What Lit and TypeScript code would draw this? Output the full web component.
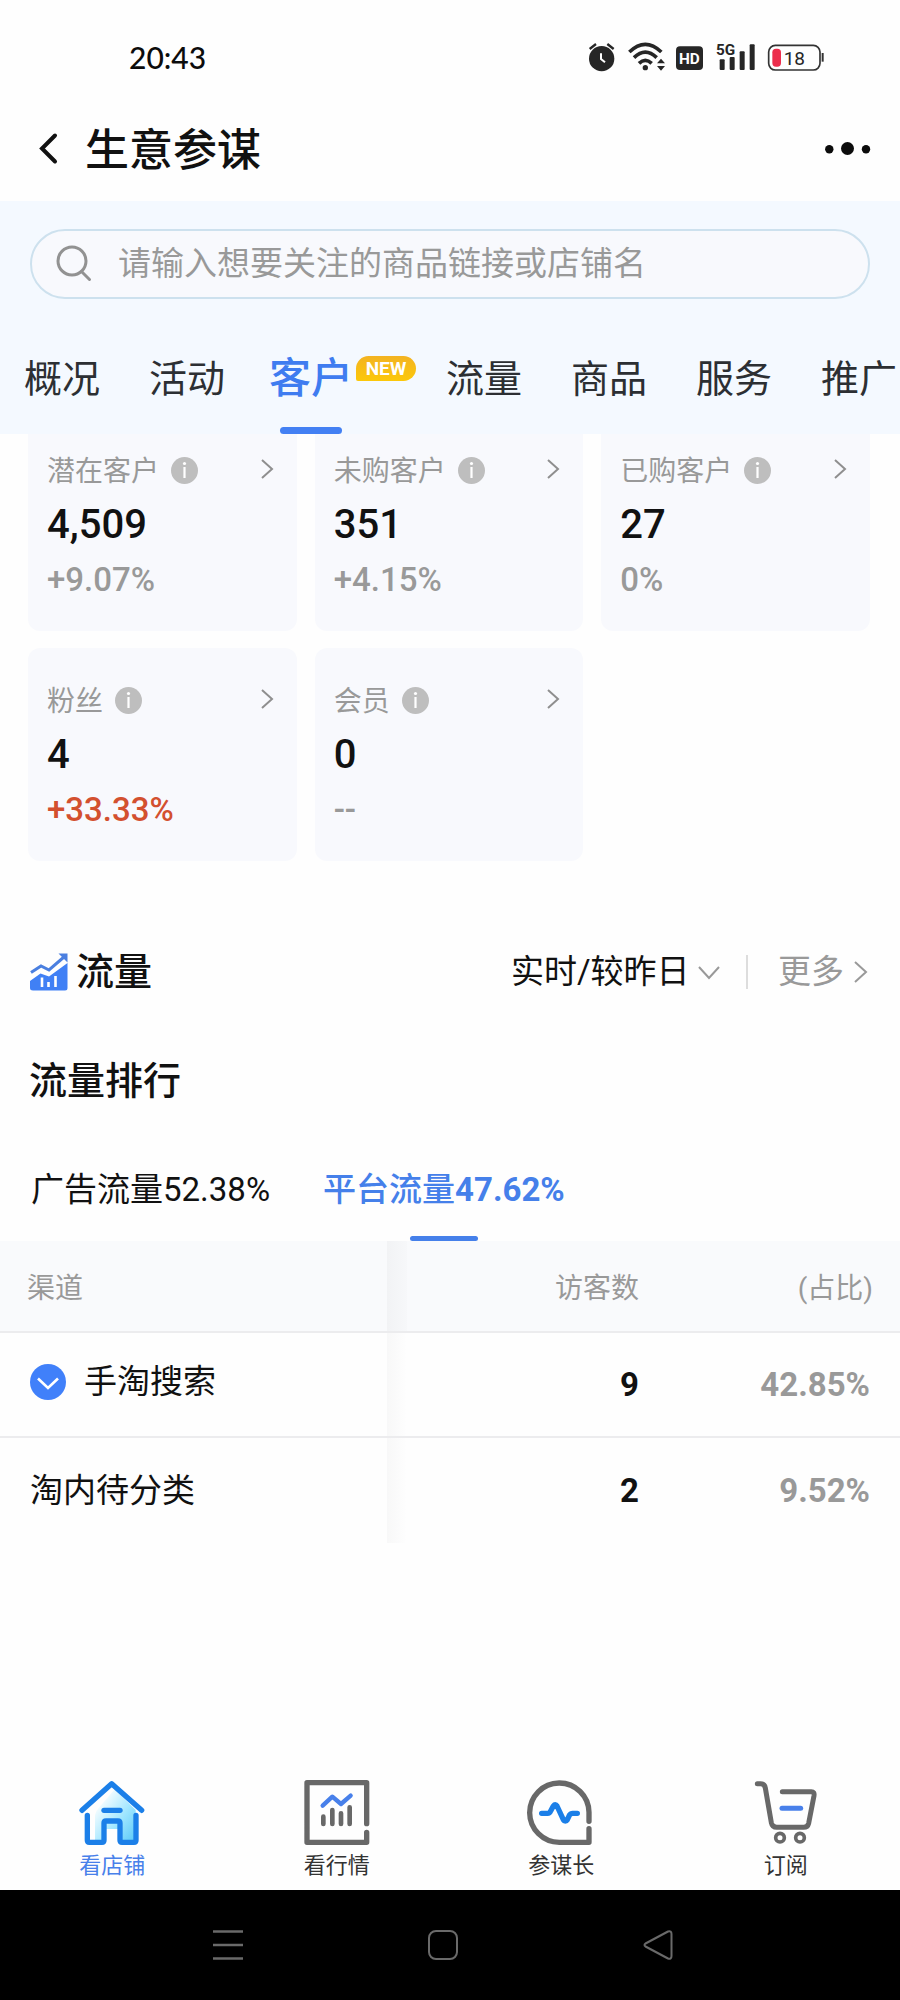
import { LitElement, html, css, svg } from "lit";
import { customElement, property, state } from "lit/decorators.js";
import { classMap } from "lit/directives/class-map.js";

const reset = css`
  * {
    box-sizing: border-box;
  }
  button,
  select,
  input {
    margin: 0;
    padding: 0;
    border: 0;
    background: none;
    color: inherit;
    font: inherit;
    letter-spacing: inherit;
    outline: none;
    appearance: none;
  }
  button {
    cursor: pointer;
  }
  a {
    color: inherit;
    text-decoration: none;
  }
  svg {
    display: block;
    flex: none;
    overflow: visible;
  }
`;

@customElement("status-bar")
class StatusBar extends LitElement {
  static styles = [
    reset,
    css`
      :host {
        display: flex;
        align-items: center;
        justify-content: space-between;
        padding: 36px 75px 18px 129px;
        color: #0c0c0c;
      }
      .time {
        font: 500 30px/42px Lato, Roboto, sans-serif;
      }
      .icons {
        display: flex;
        gap: 11px;
      }
      .hd {
        font: 700 46px Roboto, sans-serif;
      }
      .gen {
        font: 700 46px Roboto, sans-serif;
      }
      .charge {
        font: 400 57px Roboto, sans-serif;
      }
    `,
  ];

  render() {
    return html`
      <span class="time">20:43</span>
      <div class="icons">
        <svg width="28" height="32" viewBox="114 64 84 96" fill="none" aria-label="闹钟">
          <circle cx="155" cy="117" r="38" fill="#262626" />
          <path d="M119 88l19-15M191 88l-19-15" stroke="#262626" stroke-width="7" />
          <path d="M153 101v17l12 10" stroke="#fff" stroke-width="6" />
        </svg>
        <svg width="39" height="32" viewBox="231 64 117 96" fill="none" aria-label="无线网络">
          <g stroke="#262626" stroke-width="11">
            <path d="M238 97q48-46 96 0" />
            <path d="M252 114q34-33 68 0" />
            <path d="M267 131q19-18 38 0" />
          </g>
          <circle cx="286" cy="144" r="8" fill="#262626" />
          <path d="M321 131l12-14 12 14zM321 139l12 14 12-14z" fill="#262626" />
        </svg>
        <svg width="26" height="32" viewBox="381 64 78 96">
          <rect x="378" y="80" width="81" height="71" rx="12" fill="#262626" />
          <text class="hd" x="418" y="132" text-anchor="middle" fill="#fff">HD</text>
        </svg>
        <svg width="42" height="32" viewBox="492 64 126 96">
          <g fill="#262626">
            <rect x="509" y="119" width="15" height="32" rx="3" />
            <rect x="539" y="112" width="15" height="39" rx="3" />
            <rect x="569" y="95" width="15" height="56" rx="3" />
            <rect x="599" y="74" width="15" height="77" rx="3" />
            <text class="gen" x="498" y="107">5G</text>
          </g>
        </svg>
        <svg width="58" height="32" viewBox="651 64 174 96" fill="none">
          <rect x="656" y="77" width="154" height="74" rx="20" stroke="#333" stroke-width="5" />
          <rect x="667" y="87" width="26" height="54" rx="11" fill="#ec2d4c" />
          <path d="M818 100v26" stroke="#333" stroke-width="6" />
          <text class="charge" x="701" y="135" fill="#262626">18</text>
        </svg>
      </div>
    `;
  }
}

@customElement("metric-card")
class MetricCard extends LitElement {
  @property() label = "";
  @property() value = "";
  @property() delta = "";
  @property({ type: Boolean }) hot = false;

  static styles = [
    reset,
    css`
      :host {
        display: block;
        padding: 33px 24px 28px 19px;
        border-radius: 12px;
        background: #f8f9fd;
      }
      .top {
        display: flex;
        align-items: center;
        gap: 12px;
        height: 42px;
        color: #999;
        font-size: 28px;
        line-height: 42px;
      }
      .info {
        padding-bottom: 4px;
      }
      .go {
        margin-left: auto;
        padding-bottom: 6px;
      }
      .value {
        font-size: 40px;
        line-height: 64px;
        font-weight: 500;
        color: #111;
      }
      .delta {
        font-size: 33px;
        line-height: 46px;
        font-weight: 500;
        color: #999;
      }
      .delta.hot {
        color: #d3502f;
      }
    `,
  ];

  render() {
    return html`
      <div class="top">
        <span>${this.label}</span>
        <button class="info" aria-label="说明">
          <svg width="27" height="27" viewBox="0 0 27 27">
            <circle cx="13.5" cy="13.5" r="13.5" fill="#bebebe" />
            <circle cx="13.5" cy="6.5" r="1.6" fill="#fff" />
            <path d="M13.5 10v11" stroke="#fff" stroke-width="2.2" />
          </svg>
        </button>
        <button class="go" aria-label="查看">
          <svg width="12" height="20" viewBox="0 0 12 20" fill="none" stroke="#8f8f8f" stroke-width="2">
            <path d="M1 1l10 9-10 9" />
          </svg>
        </button>
      </div>
      <div class="value">${this.value}</div>
      <div class=${classMap({ delta: true, hot: this.hot })}>${this.delta}</div>
    `;
  }
}

const navIcons = {
  shop: svg`
    <defs>
      <linearGradient id="fill" x1="0" y1="0" x2="1" y2="1">
        <stop offset="0.15" stop-color="#fff" />
        <stop offset="0.6" stop-color="#9fe6ff" />
        <stop offset="1" stop-color="#58c8f8" />
      </linearGradient>
    </defs>
    <path d="M286 165Q290 150 300 140L345 88 408 150V247H361V207H312V247H286Z" fill="url(#fill)" />
    <g stroke="#1b7fe8" stroke-width="16" stroke-linecap="round" stroke-linejoin="round">
      <path d="M247 151L336 71 426 151" />
      <path d="M313 151H361" />
      <path d="M263 166V241Q263 247 269 247H307Q313 247 313 241V189Q313 183 319 183H355Q361 183 361 189V241Q361 247 367 247H403Q409 247 409 241V166" />
    </g>`,
  market: svg`
    <g stroke="#686868" stroke-width="16" stroke-linecap="round" stroke-linejoin="round">
      <path d="M1101 191V68H922V247H1101V217" />
      <path stroke-width="14" d="M971 170V192M998 150V192M1024 160V192M1050 142V192" />
    </g>
    <path d="M969 137L998 110 1024 132 1053 107" stroke="#4880ea" stroke-width="13" stroke-linecap="round" stroke-linejoin="round" />`,
  staff: svg`
    <path d="M421 184V157A89 89 0 1 0 332 247H421V206" stroke="#686868" stroke-width="16" stroke-linecap="round" stroke-linejoin="round" />
    <path d="M279 160H297Q303 160 306 153L314 138Q320 130 325 138L344 179Q350 188 356 179L362 166Q366 160 372 160H386" stroke="#1b7fe8" stroke-width="16" stroke-linecap="round" stroke-linejoin="round" />`,
  cart: svg`
    <g stroke="#686868" stroke-width="15" stroke-linecap="round" stroke-linejoin="round">
      <path d="M926 71H936Q948 71 950 84L968 188Q971 202 984 202H1065Q1077 202 1080 190L1096 107Q1098 95 1088 95H1001" />
      <circle cx="994" cy="233" r="13" stroke-width="11" />
      <circle cx="1054" cy="233" r="13" stroke-width="11" />
    </g>
    <path d="M1000 145H1056" stroke="#4880ea" stroke-width="15" stroke-linecap="round" />`,
};

const navItems = [
  { label: "看店铺", icon: navIcons.shop, box: "238 60 198 198" },
  { label: "看行情", icon: navIcons.market, box: "913 60 198 198" },
  { label: "参谋长", icon: navIcons.staff, box: "238 60 198 198" },
  { label: "订阅", icon: navIcons.cart, box: "913 60 198 198" },
];

@customElement("bottom-nav")
class BottomNav extends LitElement {
  static styles = [
    reset,
    css`
      :host {
        display: block;
      }
      .bar {
        display: grid;
        grid-template-columns: repeat(4, 1fr);
        padding: 0 2px 10px 0;
      }
      .item {
        display: flex;
        flex-direction: column;
        align-items: center;
        gap: 6px;
        font-size: 22px;
        line-height: 28px;
        color: #333;
      }
      .item.on {
        color: #4880ea;
      }
    `,
  ];

  render() {
    return html`
      <nav class="bar">
        ${navItems.map(
          (item, i) => html`
            <a class=${classMap({ item: true, on: i === 0 })} href="#">
              <svg width="66" height="66" viewBox=${item.box} fill="none">${item.icon}</svg>
              <span>${item.label}</span>
            </a>
          `
        )}
      </nav>
    `;
  }
}

const tabs = ["概况", "活动", "客户", "流量", "商品", "服务", "推广"];

const metrics = [
  { label: "潜在客户", value: "4,509", delta: "+9.07%" },
  { label: "未购客户", value: "351", delta: "+4.15%" },
  { label: "已购客户", value: "27", delta: "0%" },
  { label: "粉丝", value: "4", delta: "+33.33%", hot: true },
  { label: "会员", value: "0", delta: "--" },
];

const sources = [
  { name: "广告流量", share: "52.38%" },
  { name: "平台流量", share: "47.62%" },
];

const channels = [
  { name: "手淘搜索", visitors: 9, share: "42.85%", expandable: true },
  { name: "淘内待分类", visitors: 2, share: "9.52%", expandable: false },
];

@customElement("app-root")
class AppRoot extends LitElement {
  @state() private tab = "客户";
  @state() private source = 1;

  static styles = [
    reset,
    css`
      :host {
        display: flex;
        flex-direction: column;
        min-height: 100vh;
        overflow: hidden;
        background: #fefefe;
        color: #111;
        font-family: Roboto, "Noto Sans CJK SC", sans-serif;
      }
      .titlebar {
        display: flex;
        align-items: center;
        gap: 28px;
        padding: 18px 29px 17px 37px;
      }
      .title {
        margin: 0;
        padding-top: 4px;
        font-size: 44px;
        line-height: 66px;
        font-weight: 500;
      }
      .more-menu {
        margin-left: auto;
      }
      .head {
        position: relative;
        z-index: 1;
        background: #f4f9ff;
      }
      .search {
        display: flex;
        align-items: center;
        gap: 26px;
        height: 70px;
        margin: 0 30px;
        padding: 0 24px;
        border: 2px solid #cde1ee;
        border-radius: 35px;
        background: #f8f9fd;
      }
      .search-wrap {
        padding-top: 28px;
      }
      .search input {
        flex: 1;
        min-width: 0;
        font-size: 33px;
        line-height: 48px;
      }
      .search input::placeholder {
        color: #999;
        opacity: 1;
      }
      .tabs {
        display: flex;
        overflow: hidden;
        padding-top: 48px;
      }
      .tab {
        display: flex;
        flex: none;
        padding: 0 25px 0 24px;
        font-size: 38px;
        line-height: 64px;
        color: #2c2f33;
      }
      .tab .name {
        display: flex;
        flex-direction: column;
        align-items: center;
        height: 87px;
      }
      .tab.on {
        padding: 0 6px 0 19px;
        font-size: 42px;
        font-weight: 500;
        color: #3f7cf0;
      }
      .tab.on .name::after {
        content: "";
        width: 62px;
        height: 7px;
        margin-top: 16px;
        border-radius: 4px;
        background: #4380f3;
      }
      .badge {
        align-self: flex-start;
        margin: 9px 0 0 3px;
        width: 60px;
        border-radius: 13px 13px 13px 2px;
        background: linear-gradient(#f3b322, #fcc80a);
        color: #fff;
        font-size: 19px;
        line-height: 25px;
        font-weight: 700;
        text-align: center;
      }
      .content {
        flex: 1;
      }
      .cards {
        display: grid;
        grid-template-columns: repeat(3, 1fr);
        gap: 17px 18px;
        margin-top: -16px;
        padding: 0 30px 0 28px;
      }
      .section {
        display: flex;
        align-items: center;
        height: 48px;
        margin-top: 87px;
        padding: 0 33px 0 30px;
        font-size: 33px;
        line-height: 48px;
      }
      .heading {
        margin: 0;
        font-size: 38px;
        line-height: 48px;
        font-weight: 500;
      }
      .section .heading {
        margin-left: 8px;
      }
      .period {
        display: flex;
        align-items: center;
        gap: 8px;
        margin-left: auto;
      }
      .divider {
        width: 2px;
        height: 34px;
        margin: 0 30px 0 26px;
        background: #ddd;
      }
      .more {
        display: flex;
        align-items: center;
        gap: 10px;
        color: #999;
      }
      .rank {
        margin: 61px 29px 0;
      }
      .sources {
        display: flex;
        gap: 53px;
        margin-top: 61px;
        padding: 0 31px;
        font-size: 33px;
        line-height: 48px;
      }
      .source {
        display: flex;
        flex-direction: column;
        align-items: center;
        height: 75px;
      }
      .source.on {
        color: #4580ea;
        font-weight: 500;
      }
      .source b {
        font-weight: 400;
      }
      .source.on b {
        font-weight: 700;
      }
      .source.on::after {
        content: "";
        width: 68px;
        height: 5px;
        margin-top: 22px;
        border-radius: 3px;
        background: #4580ea;
      }
      .table {
        width: 100%;
        border-collapse: separate;
        border-spacing: 0;
        table-layout: fixed;
        font-size: 33px;
        line-height: 48px;
      }
      .table th,
      .table td {
        border-bottom: 2px solid #ececee;
        text-align: right;
      }
      .table th {
        height: 92px;
        padding: 6px 27px 0;
        background-color: #f9fafc;
        color: #999;
        font-size: 28px;
        font-weight: 400;
      }
      .table td {
        height: 105px;
        padding: 0 30px;
        font-weight: 700;
      }
      .table th:first-child,
      .table td:first-child {
        width: 43%;
        text-align: left;
      }
      .table th:nth-child(2),
      .table td:nth-child(2) {
        width: 31%;
        padding-right: 27px;
        background-image: linear-gradient(90deg, rgba(60, 60, 70, 0.04), rgba(60, 60, 70, 0.01));
        background-size: 20px 100%;
        background-repeat: no-repeat;
      }
      .table td:nth-child(2) {
        background-image: linear-gradient(90deg, rgba(60, 60, 70, 0.03), rgba(60, 60, 70, 0));
      }
      .table tr:last-child td {
        border-bottom: 0;
      }
      .table .share {
        color: #999;
      }
      .table .channel {
        font-weight: 400;
      }
      .table thead tr:last-child th {
        border-bottom: 2px solid #ececee;
      }
      .channel-row {
        display: flex;
        align-items: center;
        gap: 18px;
      }
      .channel-row.expandable {
        padding-bottom: 6px;
      }
      .system {
        display: flex;
        justify-content: center;
        gap: 185px;
        padding: 40px 14px 40px 0;
        background: #000;
      }
    `,
  ];

  render() {
    return html`
      <status-bar></status-bar>
      <header class="titlebar">
        <button aria-label="返回">
          <svg width="20" height="32" viewBox="0 0 20 32" fill="none" stroke="#111" stroke-width="4" stroke-linecap="round">
            <path d="M18 2.500L5 15.500l13 13" />
          </svg>
        </button>
        <h1 class="title">生意参谋</h1>
        <button class="more-menu" aria-label="更多操作">
          <svg width="46" height="14" viewBox="0 0 46 14" fill="#0c0c0c">
            <circle cx="4.300" cy="7.300" r="4.200" />
            <circle cx="22.500" cy="6.500" r="6.500" />
            <circle cx="41" cy="7.300" r="4.200" />
          </svg>
        </button>
      </header>

      <section class="head">
        <div class="search-wrap">
          <label class="search">
            <svg width="36" height="36" viewBox="0 0 36 36" fill="none" stroke="#929292" stroke-width="3">
              <circle cx="16" cy="15" r="14" />
              <path d="M25.500 25.500l8 8" stroke-linecap="round" />
            </svg>
            <input type="text" aria-label="搜索" placeholder="请输入想要关注的商品链接或店铺名" />
          </label>
        </div>
        <nav class="tabs">
          ${tabs.map(
            (name) => html`
              <button class=${classMap({ tab: true, on: name === this.tab })} @click=${() => (this.tab = name)}>
                <span class="name">${name}</span>
                ${name === "客户" ? html`<span class="badge">NEW</span>` : ""}
              </button>
            `
          )}
        </nav>
      </section>

      <main class="content">
        <div class="cards">
          ${metrics.map(
            (m) => html`
              <metric-card .label=${m.label} .value=${m.value} .delta=${m.delta} .hot=${!!m.hot}></metric-card>
            `
          )}
        </div>

        <div class="section">
          <svg width="38" height="38" viewBox="0 0 38 38" fill="none">
            <path d="M0 28L10.500 20.500 19 23.500 37.500 10V35Q37.500 37.500 35 37.500H3Q0 37.500 0 35Z" fill="#4080f5" />
            <path d="M1 19.500L11 13 19 17 34 4" stroke="#4a7fe0" stroke-width="3" />
            <path d="M28.500 .5H37.500V9.500Z" fill="#4a7fe0" />
            <path d="M12 24.500V34M18.500 29V34M25.500 23V34" stroke="#fff" stroke-width="2.600" />
          </svg>
          <h2 class="heading">流量</h2>
          <label class="period">
            <select aria-label="时间范围">
              <option>实时/较昨日</option>
            </select>
            <svg width="22" height="13" viewBox="0 0 22 13" fill="none" stroke="#999" stroke-width="2">
              <path d="M1 1l10 11L21 1" />
            </svg>
          </label>
          <span class="divider"></span>
          <a class="more" href="#">
            更多
            <svg width="13" height="22" viewBox="0 0 13 22" fill="none" stroke="#999" stroke-width="2">
              <path d="M1 1l11 10L1 21" />
            </svg>
          </a>
        </div>

        <h2 class="heading rank">流量排行</h2>
        <div class="sources">
          ${sources.map(
            (s, i) => html`
              <button class=${classMap({ source: true, on: i === this.source })} @click=${() => (this.source = i)}>
                <span>${s.name}<b>${s.share}</b></span>
              </button>
            `
          )}
        </div>
        <table class="table">
          <thead>
            <tr>
              <th scope="col">渠道</th>
              <th scope="col">访客数</th>
              <th scope="col">(占比)</th>
            </tr>
          </thead>
          <tbody>
            ${channels.map(
              (c) => html`
                <tr>
                  <td class="channel">
                    <div class=${classMap({ "channel-row": true, expandable: c.expandable })}>
                      ${c.expandable
                        ? html`<button aria-label="展开">
                            <svg width="36" height="36" viewBox="0 0 36 36" fill="none">
                              <circle cx="18" cy="18" r="18" fill="#4080fa" />
                              <path d="M8 14.500l10 9.500 10-9.500" stroke="#fff" stroke-width="2.600" />
                            </svg>
                          </button>`
                        : ""}
                      <span>${c.name}</span>
                    </div>
                  </td>
                  <td>${c.visitors}</td>
                  <td class="share">${c.share}</td>
                </tr>
              `
            )}
          </tbody>
        </table>
      </main>

      <bottom-nav></bottom-nav>
      <footer class="system">
        <button aria-label="最近任务">
          <svg width="30" height="30" viewBox="0 0 30 30" fill="none" stroke="#6a6a6a" stroke-width="2.400">
            <path d="M0 1.500H30M0 15H30M0 28.500H30" />
          </svg>
        </button>
        <button aria-label="主屏幕">
          <svg width="30" height="30" viewBox="0 0 30 30" fill="none" stroke="#6a6a6a" stroke-width="2">
            <rect x="1" y="1" width="28" height="28" rx="7" />
          </svg>
        </button>
        <button aria-label="返回上一级">
          <svg width="30" height="30" viewBox="0 0 30 30" fill="none" stroke="#6a6a6a" stroke-width="2" stroke-linejoin="round">
            <path d="M2.500 13.500L25 1.500Q28.500 .5 28.500 4V26Q28.500 29.500 25 28.500L2.500 16.500Q.5 15 2.500 13.500Z" />
          </svg>
        </button>
      </footer>
    `;
  }
}
